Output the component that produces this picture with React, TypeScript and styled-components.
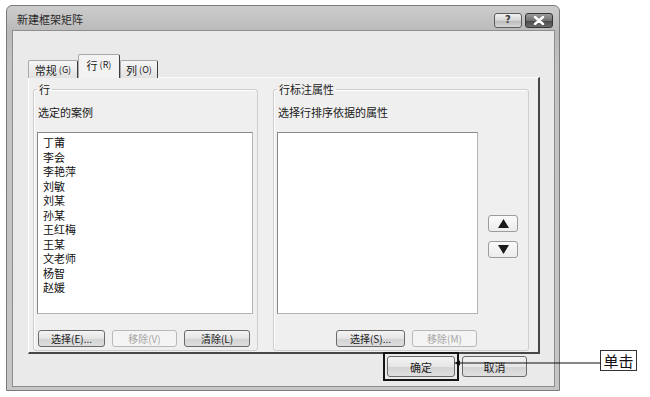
import React from "react";
import styled, { createGlobalStyle } from "styled-components";

const GlobalStyle = createGlobalStyle`
  html, body {
    margin: 0;
    padding: 0;
    background: #ffffff;
  }
  body {
    font-family: "Noto Sans CJK SC", "Liberation Sans", sans-serif;
    color: #222;
  }
`;

const cases = [
  "丁莆",
  "李会",
  "李艳萍",
  "刘敏",
  "刘某",
  "孙某",
  "王红梅",
  "王某",
  "文老师",
  "杨智",
  "赵媛",
];

const App = () => {
  return (
    <>
      <GlobalStyle />
      <Page>
        <Window>
          <TitleBar>
            <TitleText>新建框架矩阵</TitleText>
            <TitleButtons>
              <HelpButton>?</HelpButton>
              <CloseButton>
                <svg width="12" height="9" viewBox="0 0 12 9">
                  <path
                    d="M2 1 L10 8 M10 1 L2 8"
                    stroke="#ffffff"
                    strokeWidth="2.4"
                    strokeLinecap="round"
                  />
                </svg>
              </CloseButton>
            </TitleButtons>
          </TitleBar>
          <Client>
            <TabStrip>
              <Tab $w={50}>
                常规<Key>(G)</Key>
              </Tab>
              <Tab $w={42} $active>
                行<Key>(R)</Key>
              </Tab>
              <Tab $w={38}>
                列<Key>(O)</Key>
              </Tab>
            </TabStrip>
            <TabPanel>
              <Group $w={225}>
                <Legend>行</Legend>
                <FieldLabel>选定的案例</FieldLabel>
                <ListBox $w={216}>
                  {cases.map((c) => (
                    <ListItem key={c}>{c}</ListItem>
                  ))}
                </ListBox>
                <ButtonRow $w={216} $justify="flex-start">
                  <SmallButton $w={67}>选择(E)...</SmallButton>
                  <SmallButton $w={65} disabled>
                    移除(V)
                  </SmallButton>
                  <SmallButton $w={66}>清除(L)</SmallButton>
                </ButtonRow>
              </Group>
              <Group $w={256}>
                <Legend>行标注属性</Legend>
                <FieldLabel>选择行排序依据的属性</FieldLabel>
                <ListRow>
                  <ListBox $w={201} />
                  <ArrowColumn>
                    <ArrowButton>
                      <svg width="11" height="9" viewBox="0 0 11 9">
                        <path d="M5.5 0 L11 9 L0 9 Z" fill="#1a1a1a" />
                      </svg>
                    </ArrowButton>
                    <ArrowButton>
                      <svg width="11" height="9" viewBox="0 0 11 9">
                        <path d="M0 0 L11 0 L5.5 9 Z" fill="#1a1a1a" />
                      </svg>
                    </ArrowButton>
                  </ArrowColumn>
                </ListRow>
                <ButtonRow $w={201} $justify="flex-end">
                  <SmallButton $w={69}>选择(S)...</SmallButton>
                  <SmallButton $w={65} disabled>
                    移除(M)
                  </SmallButton>
                </ButtonRow>
              </Group>
            </TabPanel>
            <Footer>
              <MarkFrame>
                <DialogButton $w={68}>确定</DialogButton>
              </MarkFrame>
              <DialogButton $w={65}>取消</DialogButton>
            </Footer>
          </Client>
        </Window>

        <Connector width="148" height="10" viewBox="0 0 148 10">
          <path d="M4 5 L148 5" stroke="#111" strokeWidth="1.2" />
          <path d="M0 5 L6 2.5 L6 7.5 Z" fill="#111" />
        </Connector>
        <Callout>单击</Callout>
      </Page>
    </>
  );
};

const Page = styled.div`
  position: relative;
  width: 650px;
  height: 397px;
  box-sizing: border-box;
  padding: 5px 0 0 6px;
  background: #ffffff;
  overflow: hidden;
`;

const Window = styled.div`
  width: 554px;
  height: 386px;
  box-sizing: border-box;
  display: flex;
  flex-direction: column;
  padding: 0 4px 3px 5px;
  border: 1px solid #7a7a7a;
  border-radius: 6px 6px 0 0;
  background: linear-gradient(#cdcdcd, #b9b9b9 26px, #c2c2c2 60px, #c6c6c6);
`;

const TitleBar = styled.div`
  height: 24px;
  display: flex;
  align-items: center;
  justify-content: space-between;
  padding: 0 2px 0 5px;
`;

const TitleText = styled.span`
  font-size: 11px;
  line-height: 14px;
  color: #2b2b2b;
  margin-top: 2px;
`;

const TitleButtons = styled.div`
  display: flex;
  gap: 3px;
  margin-top: 4px;
`;

const TitleButtonBase = styled.div`
  width: 28px;
  height: 15px;
  box-sizing: border-box;
  border-radius: 3px;
  display: flex;
  align-items: center;
  justify-content: center;
`;

const HelpButton = styled(TitleButtonBase)`
  border: 1px solid #5c5c5c;
  background: linear-gradient(#f2f2f2, #d4d4d4 50%, #b8b8b8 51%, #d8d8d8);
  font-family: "DejaVu Sans", sans-serif;
  font-weight: bold;
  font-size: 10px;
  line-height: 10px;
  color: #3a3a3a;
`;

const CloseButton = styled(TitleButtonBase)`
  border: 1px solid #353535;
  background: linear-gradient(#9c9c9c, #707070 50%, #474747 51%, #6c6c6c);
`;

const Client = styled.div`
  flex: 1;
  display: flex;
  flex-direction: column;
  padding: 24px 0 0 15px;
  background: #eaeaea;
  border: 1px solid #8e8e8e;
`;

const TabStrip = styled.div`
  display: flex;
  align-items: flex-end;
  height: 23px;
  margin-bottom: -1px;
  position: relative;
  z-index: 1;
`;

const Tab = styled.div<{ $w: number; $active?: boolean }>`
  width: ${(p) => p.$w}px;
  height: ${(p) => (p.$active ? 24 : 18)}px;
  box-sizing: border-box;
  display: flex;
  align-items: center;
  justify-content: center;
  padding-bottom: ${(p) => (p.$active ? 3 : 0)}px;
  font-size: 11px;
  line-height: 14px;
  color: #1a1a1a;
  border: 1px solid #a9a9a9;
  border-right: 1px solid #3c3c3c;
  border-bottom: none;
  border-radius: 2px 2px 0 0;
  background: ${(p) =>
    p.$active ? "#f3f3f3" : "linear-gradient(#f6f6f6, #e2e2e2)"};
`;

const Key = styled.span`
  font-size: 9px;
  margin-left: 2px;
`;

const TabPanel = styled.div`
  width: 512px;
  height: 277px;
  box-sizing: border-box;
  display: flex;
  align-items: flex-start;
  gap: 15px;
  padding: 4px 0 0 4px;
  background: #efefef;
  border-top: 1px solid #fbfbfb;
  border-left: 1px solid #fbfbfb;
  border-right: 2px solid #464646;
  border-bottom: 2px solid #464646;
`;

const Group = styled.fieldset<{ $w: number }>`
  width: ${(p) => p.$w}px;
  height: 269px;
  box-sizing: border-box;
  margin: 0;
  padding: 0 4px 3px 3px;
  min-width: 0;
  display: flex;
  flex-direction: column;
  border: 1px solid #cdcdcd;
  border-radius: 3px;
  box-shadow: inset 1px 1px 0 #ffffff;
`;

const Legend = styled.legend`
  font-size: 11px;
  line-height: 14px;
  padding: 0 2px;
  margin-left: 0;
  color: #1a1a1a;
`;

const FieldLabel = styled.div`
  font-size: 11px;
  line-height: 14px;
  margin: 9px 0 0 1px;
  color: #1a1a1a;
`;

const ListRow = styled.div`
  display: flex;
  align-items: flex-start;
`;

const ListBox = styled.div<{ $w: number }>`
  width: ${(p) => p.$w}px;
  height: 182px;
  box-sizing: border-box;
  margin-top: 13px;
  padding: 2px 0 0 5px;
  background: #ffffff;
  border: 1px solid #8a8a8a;
  border-right-color: #b4b4b4;
  border-bottom-color: #b4b4b4;
`;

const ListItem = styled.div`
  font-size: 11px;
  line-height: 14.5px;
  color: #111;
`;

const ArrowColumn = styled.div`
  display: flex;
  flex-direction: column;
  gap: 9px;
  margin-left: 10px;
  padding-top: 96px;
`;

const ArrowButton = styled.div`
  width: 30px;
  height: 17px;
  box-sizing: border-box;
  display: flex;
  align-items: center;
  justify-content: center;
  border: 1px solid #9c9c9c;
  border-radius: 3px;
  background: linear-gradient(#fafafa, #ececec);
`;

const ButtonRow = styled.div<{ $w: number; $justify: string }>`
  width: ${(p) => p.$w}px;
  display: flex;
  justify-content: ${(p) => p.$justify};
  gap: 7px;
  margin-top: 16px;
  padding: 0 1px;
  box-sizing: border-box;
`;

const SmallButton = styled.button<{ $w: number }>`
  width: ${(p) => p.$w}px;
  height: 17px;
  padding: 0;
  font-family: "Noto Sans CJK SC", "Liberation Sans", sans-serif;
  font-size: 10px;
  line-height: 14px;
  color: #1c1c1c;
  border: 1px solid #6a6a6a;
  border-radius: 3px;
  background: linear-gradient(#f4f4f4, #e4e4e4 50%, #d2d2d2 51%, #dedede);

  &:disabled {
    color: #a6a6a6;
    border-color: #b9b9b9;
    background: #f4f4f4;
  }
`;

const Footer = styled.div`
  display: flex;
  justify-content: flex-end;
  align-items: flex-start;
  gap: 7px;
  padding-right: 27px;
  margin-top: 2px;
`;

const MarkFrame = styled.span`
  display: flex;
  margin: -4px;
  padding: 2px;
  border: 2px solid #151515;
`;

const DialogButton = styled.button<{ $w: number }>`
  width: ${(p) => p.$w}px;
  height: 21px;
  padding: 0;
  font-family: "Noto Sans CJK SC", "Liberation Sans", sans-serif;
  font-size: 11px;
  line-height: 14px;
  color: #1c1c1c;
  border: 1px solid #6a6a6a;
  border-radius: 3px;
  background: linear-gradient(#f4f4f4, #e6e6e6 50%, #d3d3d3 51%, #e0e0e0);
`;

const Connector = styled.svg`
  position: absolute;
  left: 454px;
  top: 358px;
`;

const Callout = styled.div`
  position: absolute;
  left: 600px;
  top: 350px;
  width: 37px;
  height: 21px;
  box-sizing: border-box;
  display: flex;
  align-items: center;
  justify-content: center;
  border: 1px solid #333;
  background: #ffffff;
  font-size: 15px;
  line-height: 18px;
  color: #111;
`;

export default App;
